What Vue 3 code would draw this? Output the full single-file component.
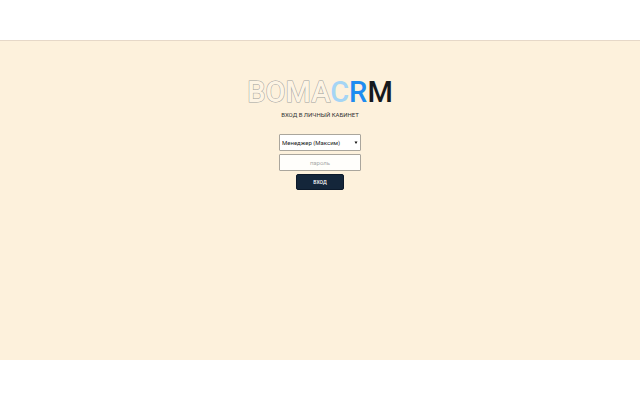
<script setup>
import { ref } from 'vue'

const account = ref('manager')
const password = ref('')
</script>

<template>
  <div class="page">
    <main class="screen">
      <h1 class="logo"><span class="outline">BOMA</span><span class="c">C</span><span class="r">R</span><span class="m">M</span></h1>
      <p class="caption">ВХОД В ЛИЧНЫЙ КАБИНЕТ</p>
      <form class="form" @submit.prevent>
        <div class="select-wrap">
          <select v-model="account" class="field account" aria-label="Пользователь">
            <option value="manager">Менеджер (Максим)</option>
          </select>
          <svg class="arrow" viewBox="0 0 4 4" aria-hidden="true"><path d="M0.5 0.5h3L2 3z" /></svg>
        </div>
        <input v-model="password" class="field password" type="password" placeholder="пароль" aria-label="пароль">
        <button class="submit" type="submit">ВХОД</button>
      </form>
    </main>
  </div>
</template>

<style>
body {
  background: #fff;
}
</style>

<style scoped>
.page {
  box-sizing: border-box;
  display: flex;
  min-height: 100vh;
  padding: 40px 0;
  font-family: Roboto, sans-serif;
  color: #333;
}

.screen {
  flex: 1;
  display: flex;
  flex-direction: column;
  align-items: center;
  box-sizing: border-box;
  padding-top: 33px;
  border-top: 1px solid #e6d8c8;
  background: #fdf1dc;
}

.logo {
  margin: 0;
  font-size: 29px;
  line-height: 36px;
  font-weight: 500;
}

.outline {
  color: #fdf4e4;
  -webkit-text-stroke: 1px #a09f9c;
  paint-order: stroke fill;
}

.c {
  color: #a5d5f5;
}

.r {
  color: #1e8cf0;
}

.m {
  color: #16191c;
}

.caption {
  margin: 0;
  font-size: 6px;
  line-height: 10px;
}

.form {
  display: flex;
  flex-direction: column;
  align-items: center;
  gap: 3px;
  width: 82px;
  padding-top: 14px;
}

.select-wrap {
  position: relative;
  display: flex;
  width: 100%;
}

.field {
  box-sizing: border-box;
  width: 100%;
  height: 17px;
  margin: 0;
  border: 1px solid #aaa69d;
  border-radius: 1px;
  background: #fff;
  font-family: inherit;
  font-size: 6px;
  color: #222;
  outline: none;
}

.account {
  appearance: none;
  padding: 0 2px 1px;
}

.password {
  padding: 0 2px 1px;
  background: #fffefb;
  text-align: center;
}

.password::placeholder {
  color: #aaa;
  opacity: 1;
}

.arrow {
  position: absolute;
  top: 7px;
  right: 3px;
  width: 4px;
  height: 4px;
  fill: #111;
  pointer-events: none;
}

.submit {
  width: 48px;
  height: 16px;
  padding: 0;
  border: 1px solid #0c1a2b;
  border-radius: 2px;
  background: #14263a;
  font-family: inherit;
  font-size: 5px;
  font-weight: 500;
  color: #fff;
}
</style>
